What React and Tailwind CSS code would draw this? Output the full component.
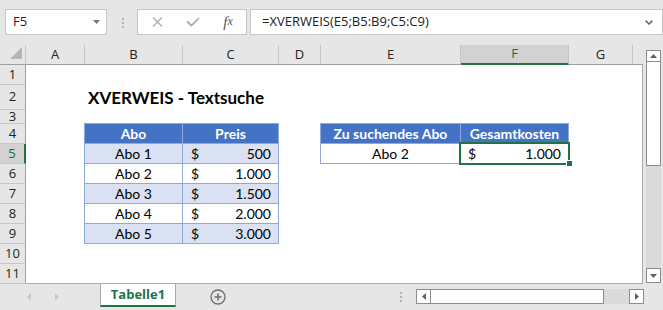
import React from 'react';

const colHeads = [
  { id: 'A', w: 'w-[59px]' },
  { id: 'B', w: 'w-[98px]' },
  { id: 'C', w: 'w-[96px]' },
  { id: 'D', w: 'w-[42px]' },
  { id: 'E', w: 'w-[140px]' },
  { id: 'F', w: 'w-[108px]', active: true },
  { id: 'G', w: 'w-[64px]' },
];

const rowHeads = [
  { n: 1, h: 'h-[20px]' },
  { n: 2, h: 'h-[25px]' },
  { n: 3, h: 'h-[14px]' },
  { n: 4, h: 'h-[20px]' },
  { n: 5, h: 'h-[20px]', active: true },
  { n: 6, h: 'h-[20px]' },
  { n: 7, h: 'h-[20px]' },
  { n: 8, h: 'h-[20px]' },
  { n: 9, h: 'h-[20px]' },
  { n: 10, h: 'h-[20px]' },
  { n: 11, h: 'h-[20px]' },
];

const abos = [
  { name: 'Abo 1', price: '500' },
  { name: 'Abo 2', price: '1.000' },
  { name: 'Abo 3', price: '1.500' },
  { name: 'Abo 4', price: '2.000' },
  { name: 'Abo 5', price: '3.000' },
];

const Tri = ({ dir }) => {
  // small filled arrow used in the scroll bars
  const d = {
    up: 'M0 4L3.5 0L7 4z',
    down: 'M0 0h7L3.5 4z',
    left: 'M4 0v7L0 3.5z',
    right: 'M0 0v7l4-3.5z',
  }[dir];
  const vertical = dir === 'up' || dir === 'down';
  return (
    <svg width={vertical ? 7 : 4} height={vertical ? 4 : 7} viewBox={vertical ? '0 0 7 4' : '0 0 4 7'}>
      <path d={d} fill="#5f5f5f" />
    </svg>
  );
};

const Dots = () => (
  <div className="flex flex-col gap-[2px]">
    <span className="w-[2px] h-[2px] bg-[#b3b3b3]" />
    <span className="w-[2px] h-[2px] bg-[#b3b3b3]" />
    <span className="w-[2px] h-[2px] bg-[#b3b3b3]" />
  </div>
);

const App = () => {
  return (
    <div className="w-[663px] h-[310px] overflow-hidden bg-[#e6e6e6] flex flex-col font-['Open_Sans',sans-serif] text-[#222]">
      {/* Formula bar */}
      <div className="h-[45px] shrink-0 flex items-start pt-[9px] pl-[5px]">
        <div className="w-[102px] h-[26px] bg-white border border-[#c6c6c6] flex items-center justify-between pl-[7px] pr-[6px] text-[13px]">
          <span>F5</span>
          <svg width="7" height="4" viewBox="0 0 7 4">
            <path d="M0 0h7L3.5 4z" fill="#777" />
          </svg>
        </div>
        <div className="ml-[15px] mt-[9px]">
          <Dots />
        </div>
        <div className="ml-[13px] w-[110px] h-[26px] bg-white border border-[#c6c6c6] flex items-center pl-[1px]">
          <div className="w-[36px] flex justify-center">
            <svg width="11" height="10" viewBox="0 0 11 10">
              <path d="M1 0.5l9 9M10 0.5l-9 9" stroke="#a9a9a9" strokeWidth="1.2" />
            </svg>
          </div>
          <div className="w-[36px] flex justify-center">
            <svg width="14" height="10" viewBox="0 0 14 10">
              <path d="M1 4.5l4.5 4L13 1" stroke="#a9a9a9" strokeWidth="1.7" fill="none" />
            </svg>
          </div>
          <div className="w-[34px] flex justify-center font-['Liberation_Serif',serif] italic text-[#555] text-[15px] leading-none">
            f<span className="text-[12px]">x</span>
          </div>
        </div>
        <div className="ml-[3px] w-[413px] h-[26px] bg-white border border-[#c6c6c6] flex items-center justify-between pl-[11px] pr-[9px] text-[13px]">
          <span>=XVERWEIS(E5;B5:B9;C5:C9)</span>
          <svg width="8" height="5" viewBox="0 0 8 5">
            <path d="M0.6 0.6l3.4 3.4l3.4-3.4" stroke="#666" strokeWidth="1.5" fill="none" />
          </svg>
        </div>
      </div>

      {/* Sheet */}
      <div className="flex h-[239px] shrink-0">
        <div className="w-[643px] flex flex-col">
          {/* column headers */}
          <div className="flex h-[20px] text-[13px]">
            <div className="relative w-[26px] h-[20px] border-r border-b border-r-[#c6c6c6] border-b-[#9e9e9e]">
              <svg className="absolute left-[10px] top-[2px]" width="12" height="12" viewBox="0 0 12 12">
                <path d="M12 0v12H0z" fill="#b5b5b5" />
              </svg>
            </div>
            {colHeads.map((c) => (
              <div
                key={c.id}
                className={`${c.w} h-[20px] flex items-center justify-center border-r border-r-[#c6c6c6] ${
                  c.active ? 'bg-[#d2d2d2] text-[#1e6b41] border-b-2 border-b-[#217346]' : 'border-b border-b-[#9e9e9e]'
                }`}
              >
                {c.id}
              </div>
            ))}
            <div className="w-[10px] h-[20px] border-b border-b-[#9e9e9e]" />
          </div>

          <div className="flex">
            {/* row headers */}
            <div className="w-[26px] flex flex-col text-[13px]">
              {rowHeads.map((r) => (
                <div
                  key={r.n}
                  className={`${r.h} flex items-center justify-center overflow-hidden border-b border-b-[#c6c6c6] ${
                    r.active ? 'bg-[#d2d2d2] text-[#1e6b41] border-r-2 border-r-[#217346]' : 'border-r border-r-[#9e9e9e]'
                  }`}
                >
                  {r.n}
                </div>
              ))}
            </div>

            {/* cells */}
            <div className="grid grid-cols-[58px_98px_96px_42px_140px_108px_64px_10px] grid-rows-[19px_25px_14px_20px_20px_20px_20px_20px_20px_20px_20px] w-[617px] h-[219px] bg-white border-r border-b border-[#ababab] font-['Lato',sans-serif] text-[14px] text-black">
              <div className="col-start-2 col-span-4 row-start-2 flex items-end pl-[4px] pb-[3px] text-[17px] font-bold whitespace-nowrap leading-none">
                XVERWEIS - Textsuche
              </div>

              <div className="col-start-2 col-span-2 row-start-4 row-span-6 self-start w-[195px] h-[121px] border-r border-b border-[#8ea9db]">
                <div className="flex h-[20px] bg-[#4472c4] text-white font-bold">
                  <div className="w-[98px] border-l border-t border-[#8ea9db] flex items-center justify-center">Abo</div>
                  <div className="w-[96px] border-l border-t border-[#8ea9db] flex items-center justify-center">Preis</div>
                </div>
                {abos.map((a, i) => (
                  <div key={a.name} className={`flex h-[20px] ${i % 2 === 0 ? 'bg-[#d9e1f2]' : 'bg-white'}`}>
                    <div className="w-[98px] border-l border-t border-[#8ea9db] flex items-center justify-center">{a.name}</div>
                    <div className="w-[96px] border-l border-t border-[#8ea9db] flex items-center justify-between pl-[8px] pr-[7px]">
                      <span>$</span>
                      <span>{a.price}</span>
                    </div>
                  </div>
                ))}
              </div>

              <div className="col-start-5 col-span-2 row-start-4 row-span-2 self-start w-[249px] h-[41px] border-r border-b border-[#8ea9db]">
                <div className="flex h-[20px] bg-[#4472c4] text-white font-bold">
                  <div className="w-[140px] border-l border-t border-[#8ea9db] flex items-center justify-center">Zu suchendes Abo</div>
                  <div className="w-[108px] border-l border-t border-[#8ea9db] flex items-center justify-center">Gesamtkosten</div>
                </div>
                <div className="flex h-[20px]">
                  <div className="w-[140px] border-l border-t border-[#8ea9db] flex items-center justify-center">Abo 2</div>
                  <div className="relative w-[108px] border-l border-t border-[#8ea9db] flex items-center justify-between pl-[7px] pr-[7px]">
                    <span>$</span>
                    <span>1.000</span>
                    <div className="absolute -left-[2px] -top-[2px] w-[111px] h-[23px] border-2 border-[#217346]" />
                    <div className="absolute left-[105px] top-[16px] w-[7px] h-[7px] bg-[#217346] border border-white" />
                  </div>
                </div>
              </div>
            </div>
          </div>
        </div>

        {/* vertical scroll bar */}
        <div className="w-[20px] flex flex-col pl-[3px] pt-[5px]">
          <div className="w-[15px] h-[12px] bg-white border border-[#8c8c8c] flex items-center justify-center">
            <Tri dir="up" />
          </div>
          <div className="w-[15px] h-[104px] bg-white border-x border-b border-[#8c8c8c]" />
          <div className="w-[15px] h-[102px] bg-[#dadada]" />
          <div className="w-[15px] h-[15px] bg-white border border-[#8c8c8c] flex items-center justify-center">
            <Tri dir="down" />
          </div>
        </div>
      </div>

      {/* Sheet tabs */}
      <div className="flex-1 flex items-center">
        <svg className="ml-[27px]" width="4" height="8" viewBox="0 0 4 8">
          <path d="M4 0v8L0 4z" fill="#c8c8c8" />
        </svg>
        <svg className="ml-[24px]" width="4" height="8" viewBox="0 0 4 8">
          <path d="M0 0v8l4-4z" fill="#c8c8c8" />
        </svg>
        <div className="ml-[41px] self-start w-[76px] h-[23px] bg-white border-x border-[#ababab] border-b-2 border-b-[#217346] flex items-center justify-center text-[13px] font-bold text-[#217346]">
          Tabelle1
        </div>
        <svg className="ml-[34px]" width="16" height="16" viewBox="0 0 16 16">
          <circle cx="8" cy="8" r="7" stroke="#707070" strokeWidth="1.3" fill="none" />
          <path d="M8 4.5v7M4.5 8h7" stroke="#707070" strokeWidth="1.6" />
        </svg>
        <div className="ml-[174px]">
          <Dots />
        </div>
        <div className="ml-[14px] self-start mt-[5px] flex h-[15px]">
          <div className="w-[15px] h-[15px] bg-white border border-[#8c8c8c] flex items-center justify-center">
            <Tri dir="left" />
          </div>
          <div className="w-[173px] h-[15px] bg-white border-y border-r border-[#8c8c8c]" />
          <div className="w-[25px] h-[15px] bg-[#dadada]" />
          <div className="w-[15px] h-[15px] bg-white border border-[#8c8c8c] flex items-center justify-center">
            <Tri dir="right" />
          </div>
        </div>
      </div>
    </div>
  );
};

export default App;
